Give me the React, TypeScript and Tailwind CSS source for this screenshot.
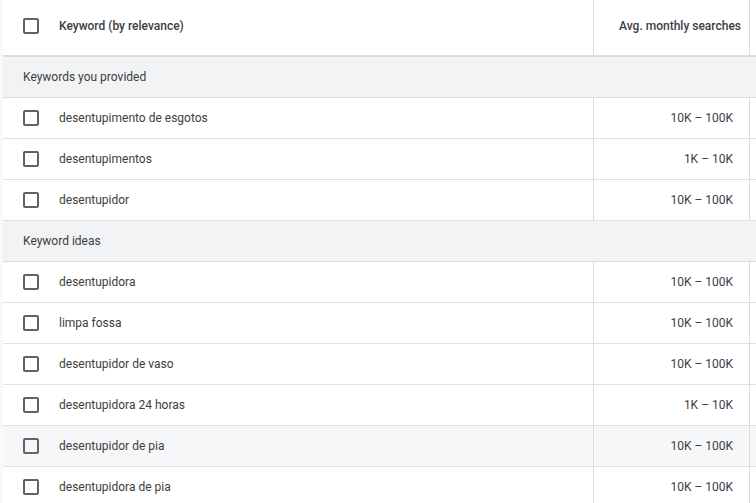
import React from 'react'

type Row = { keyword: string; searches: string; hover?: boolean }

const provided: Row[] = [
  { keyword: 'desentupimento de esgotos', searches: '10K – 100K' },
  { keyword: 'desentupimentos', searches: '1K – 10K' },
  { keyword: 'desentupidor', searches: '10K – 100K' },
]

const ideas: Row[] = [
  { keyword: 'desentupidora', searches: '10K – 100K' },
  { keyword: 'limpa fossa', searches: '10K – 100K' },
  { keyword: 'desentupidor de vaso', searches: '10K – 100K' },
  { keyword: 'desentupidora 24 horas', searches: '1K – 10K' },
  { keyword: 'desentupidor de pia', searches: '10K – 100K', hover: true },
  { keyword: 'desentupidora de pia', searches: '10K – 100K' },
]

const Checkbox = () => (
  <div className="w-4 h-4 border-2 border-[#5f6368] rounded-[2px] shrink-0" />
)

const GroupRow = ({ label }: { label: string }) => (
  <div className="h-[41px] flex items-center bg-[#f1f3f4] border-b border-[#dadce0] pl-5 text-[12px] text-[#3c4043]">
    {label}
  </div>
)

const KeywordRow = ({ row }: { row: Row }) => (
  <div
    className={`h-[41px] flex border-b border-[#e0e0e0] text-[12px] text-[#3c4043] ${
      row.hover ? 'bg-[#f6f7f8]' : 'bg-white'
    }`}
  >
    <div className="flex-1 flex items-center pl-5">
      <Checkbox />
      <span className="ml-5">{row.keyword}</span>
    </div>
    <div className="w-[156px] border-l border-[#dadce0] flex items-center justify-end pr-4">
      {row.searches}
    </div>
    <div className="w-[7px] border-l border-[#dadce0]" />
  </div>
)

export default function App() {
  return (
    <div
      className="w-[756px] h-[503px] overflow-hidden bg-[#f8f9fa] pl-[3px]"
      style={{ fontFamily: 'Roboto, "Liberation Sans", Arial, sans-serif' }}
    >
      <div className="bg-white h-full">
        {/* Header */}
        <div className="h-[57px] flex border-b-2 border-[#dadce0] text-[12px] font-medium text-[#3c4043]">
          <div className="flex-1 flex items-center pl-5 pb-1">
            <Checkbox />
            <span className="ml-5">Keyword (by relevance)</span>
          </div>
          <div className="w-[156px] border-l border-[#dadce0] flex items-center justify-end pr-2 pb-1">
            Avg. monthly searches
          </div>
          <div className="w-[7px] border-l border-[#dadce0]" />
        </div>

        <GroupRow label="Keywords you provided" />
        {provided.map(r => (
          <KeywordRow key={r.keyword} row={r} />
        ))}

        <GroupRow label="Keyword ideas" />
        {ideas.map(r => (
          <KeywordRow key={r.keyword} row={r} />
        ))}
      </div>
    </div>
  )
}
